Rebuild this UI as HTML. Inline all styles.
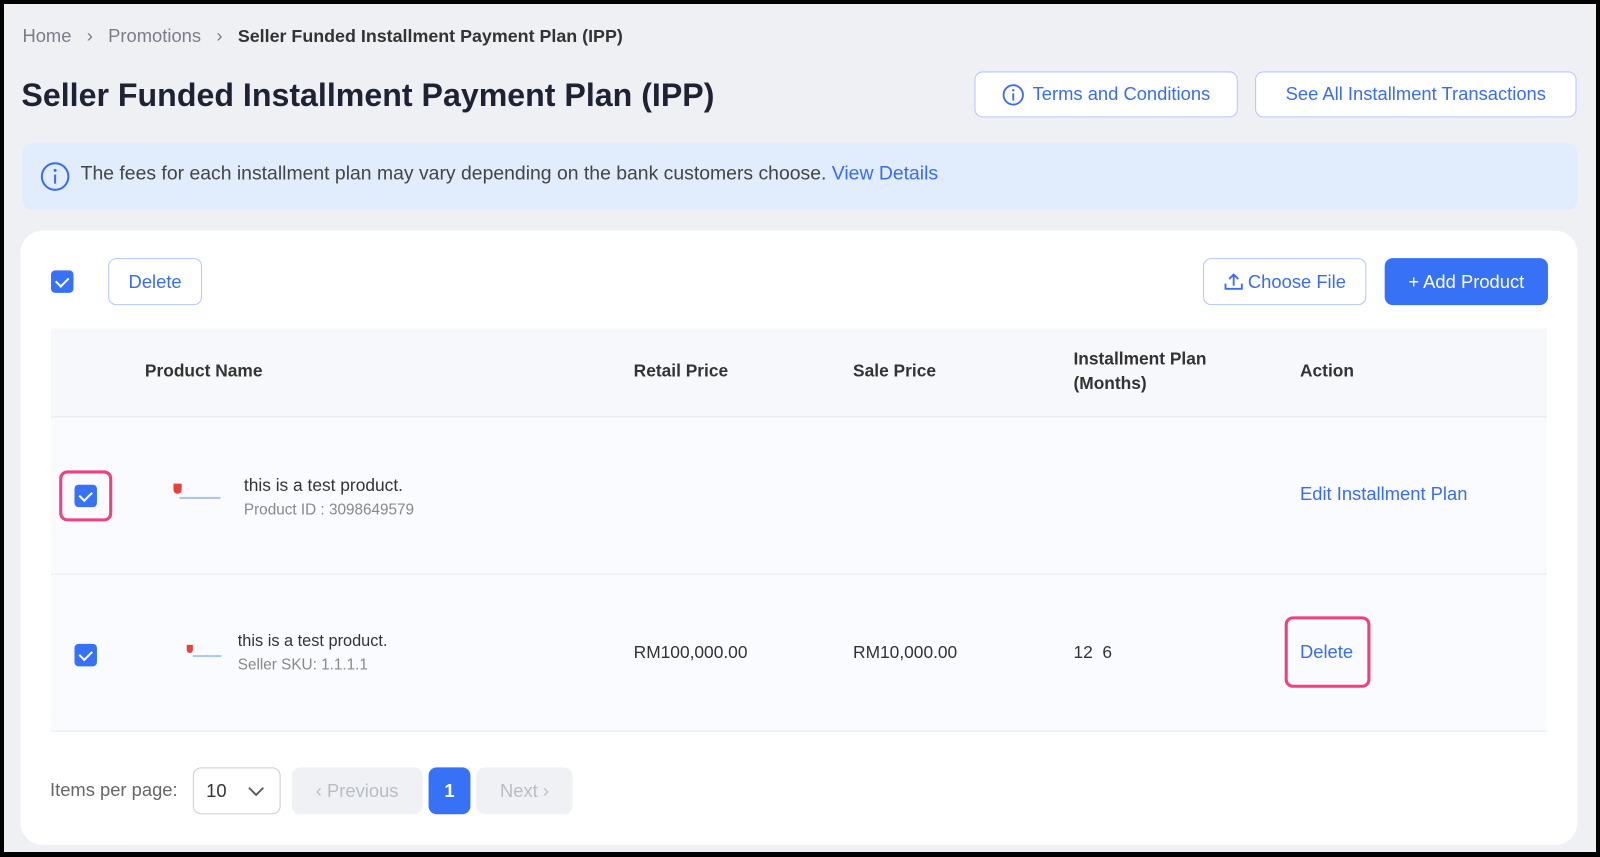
<!DOCTYPE html>
<html><head><meta charset="utf-8"><style>
*{box-sizing:border-box;margin:0;padding:0}
body{width:1600px;height:857px;background:#000;font-family:"Liberation Sans",sans-serif;overflow:hidden;position:relative}
.frame{position:absolute;left:4px;top:4px;width:1592px;height:848px;background:#eef0f4;overflow:hidden}
.w{position:absolute;left:0;top:0;width:1592px;height:848px;transform:scale(1.0204);transform-origin:-4px -4px}
.a{position:absolute}
.btn{position:absolute;border:1.5px solid #b4c6fb;border-radius:8px;background:#fff;color:#3a6cf0;font-size:18px;display:flex;align-items:center;justify-content:center}
.cb{position:absolute;width:22px;height:22px;background:#3671f6;border-radius:4px}
.cb:after{content:"";position:absolute;left:7px;top:4px;width:6px;height:10px;border:solid #fff;border-width:0 2px 2px 0;transform:rotate(45deg)}
.th{position:absolute;font-weight:bold;color:#333;font-size:17px;line-height:24px}
.t{position:absolute;color:#333;font-size:17px}
.g{position:absolute;color:#888;font-size:15px}
.pink{position:absolute;border:3px solid #f0407e;border-radius:8px}
</style></head><body>
<div class="frame"><div class="w">
<div class="a" style="left:18px;top:21px;font-size:18px;color:#7a7d86">Home&nbsp;&nbsp; ›&nbsp;&nbsp; Promotions&nbsp;&nbsp; ›&nbsp;&nbsp; <b style="color:#333;font-size:17.5px">Seller Funded Installment Payment Plan (IPP)</b></div>
<div class="a" style="left:17px;top:71px;font-size:31.5px;font-weight:bold;color:#1e2233">Seller Funded Installment Payment Plan (IPP)</div>
<div class="btn" style="left:951px;top:66px;width:258px;height:45px"><svg width="22" height="22" viewBox="0 0 22 22" style="margin-right:8px"><circle cx="11" cy="11" r="9.5" fill="none" stroke="#3a6cf0" stroke-width="1.8"/><circle cx="11" cy="6.5" r="1.2" fill="#3a6cf0"/><path d="M11 9.5v7" stroke="#3a6cf0" stroke-width="1.8"/></svg>Terms and Conditions</div>
<div class="btn" style="left:1226px;top:66px;width:315px;height:45px">See All Installment Transactions</div>
<div class="a" style="left:18px;top:136px;width:1524px;height:66px;background:#e1edfd;border-radius:10px"></div>
<svg class="a" style="left:35px;top:154px" width="30" height="30" viewBox="0 0 30 30"><circle cx="15" cy="15" r="13" fill="none" stroke="#3a6cf0" stroke-width="2"/><circle cx="15" cy="9" r="1.5" fill="#3a6cf0"/><path d="M15 13v9" stroke="#3a6cf0" stroke-width="2"/></svg>
<div class="a" style="left:75px;top:156px;font-size:19px;color:#444">The fees for each installment plan may vary depending on the bank customers choose. <span style="color:#3a6cf0">View Details</span></div>
<div class="a" style="left:16px;top:222px;width:1526px;height:602px;background:#fff;border-radius:22px"></div>
<div class="cb" style="left:46px;top:261px"></div>
<div class="btn" style="left:102px;top:249px;width:92px;height:46px">Delete</div>
<div class="btn" style="left:1175px;top:249px;width:160px;height:46px"><svg width="20" height="20" viewBox="0 0 20 20" style="margin-right:4px"><path d="M10 14V3M5.5 7.5L10 3l4.5 4.5M2 12v5h16v-5" fill="none" stroke="#3a6cf0" stroke-width="1.8"/></svg>Choose File</div>
<div class="btn" style="left:1353px;top:249px;width:160px;height:46px;background:#3671f6;border-color:#3671f6;color:#fff">+ Add Product</div>
<div class="a" style="left:46px;top:318px;width:1466px;height:86px;background:#f7f8fb"></div>
<div class="a" style="left:46px;top:404px;width:1466px;height:155px;background:#fafbfe;border-top:1px solid #e6e8ee"></div>
<div class="a" style="left:46px;top:558px;width:1466px;height:155px;background:#fafbfe;border-top:1px solid #e6e8ee;border-bottom:1px solid #e6e8ee"></div>
<div class="th" style="left:138px;top:348px">Product Name</div>
<div class="th" style="left:617px;top:348px">Retail Price</div>
<div class="th" style="left:832px;top:348px">Sale Price</div>
<div class="th" style="left:1048px;top:336px">Installment Plan<br>(Months)</div>
<div class="th" style="left:1270px;top:348px">Action</div>
<div class="pink" style="left:54px;top:457px;width:52px;height:50px"></div>
<div class="cb" style="left:69px;top:471px"></div>
<div class="a" style="left:166px;top:470px;width:8px;height:10px;background:#e8423a;border-radius:0 0 5px 5px"></div>
<div class="a" style="left:172px;top:483px;width:40px;height:2px;background:#a9c7e6"></div>
<div class="t" style="left:235px;top:462px">this is a test product.</div>
<div class="g" style="left:235px;top:487px">Product ID : 3098649579</div>
<div class="a" style="left:1270px;top:470px;font-size:18px;color:#3a6cf0">Edit Installment Plan</div>
<div class="cb" style="left:69px;top:627px"></div>
<div class="a" style="left:179px;top:628px;width:6px;height:8px;background:#e8423a;border-radius:0 0 4px 4px"></div>
<div class="a" style="left:185px;top:638px;width:28px;height:2px;background:#a9c7e6"></div>
<div class="t" style="left:229px;top:616px;font-size:16px">this is a test product.</div>
<div class="g" style="left:229px;top:639px">Seller SKU: 1.1.1.1</div>
<div class="t" style="left:617px;top:626px">RM100,000.00</div>
<div class="t" style="left:832px;top:626px">RM10,000.00</div>
<div class="t" style="left:1048px;top:626px">12&nbsp; 6</div>
<div class="pink" style="left:1255px;top:600px;width:84px;height:70px"></div>
<div class="a" style="left:1270px;top:625px;font-size:18px;color:#3a6cf0">Delete</div>
<div class="a" style="left:45px;top:760px;font-size:18px;color:#666">Items per page:</div>
<div class="a" style="left:185px;top:748px;width:86px;height:46px;border:1.5px solid #ccc;border-radius:8px;background:#fff;font-size:18px;color:#333;padding:12px 0 0 12px">10<svg width="18" height="12" viewBox="0 0 18 12" style="position:absolute;left:52px;top:17px"><path d="M2 2l7 7 7-7" fill="none" stroke="#555" stroke-width="1.8"/></svg></div>
<div class="a" style="left:282px;top:748px;width:128px;height:46px;background:#f0f1f4;border-radius:8px;color:#b8bcc5;font-size:18px;display:flex;align-items:center;justify-content:center">‹ Previous</div>
<div class="a" style="left:416px;top:748px;width:41px;height:46px;background:#3671f6;border-radius:8px;color:#fff;font-size:18px;font-weight:bold;display:flex;align-items:center;justify-content:center">1</div>
<div class="a" style="left:463px;top:748px;width:94px;height:46px;background:#f0f1f4;border-radius:8px;color:#b8bcc5;font-size:18px;display:flex;align-items:center;justify-content:center">Next ›</div>
</div></div>
</body></html>
